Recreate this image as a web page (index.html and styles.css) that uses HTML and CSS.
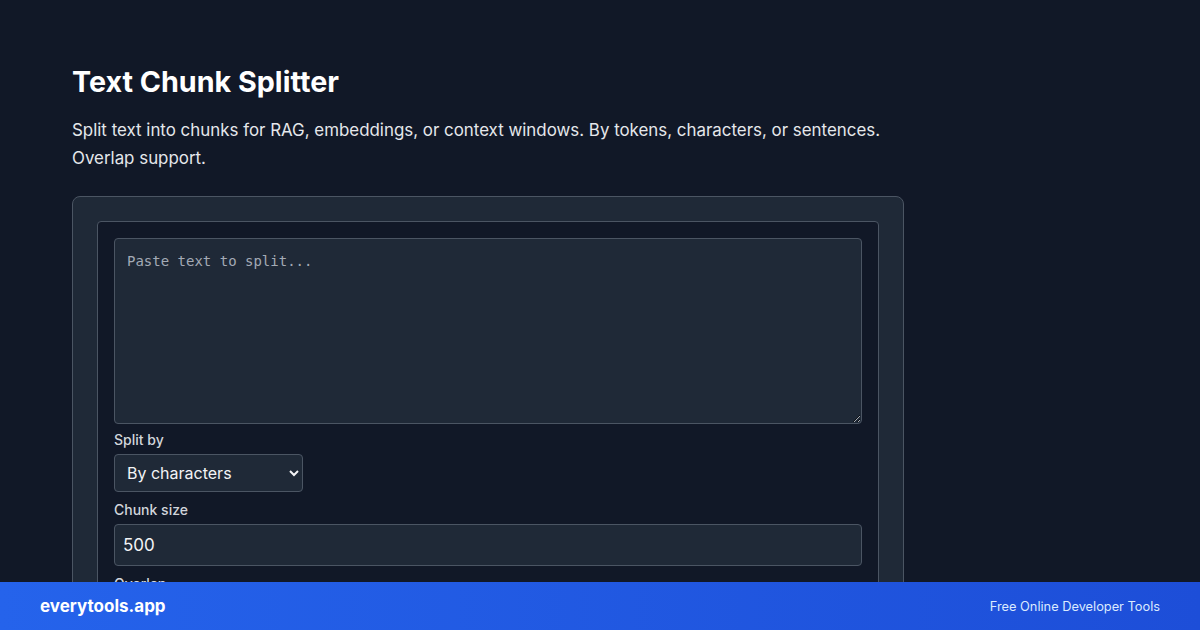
FILE: index.html
```html
<!DOCTYPE html>
<html lang="en">
<head>
<meta charset="utf-8">
<title>Text Chunk Splitter</title>
<link rel="stylesheet" href="styles.css">
</head>
<body>
<main class="page">
  <h1 class="title">Text Chunk Splitter</h1>
  <p class="desc">Split text into chunks for RAG, embeddings, or context windows. By tokens, characters, or sentences. Overlap support.</p>
  <section class="card">
    <div class="panel">
      <textarea class="text-in" placeholder="Paste text to split..."></textarea>
      <label class="lbl">Split by</label>
      <select class="sel">
        <option>By characters</option>
        <option>By tokens</option>
        <option>By sentences</option>
      </select>
      <label class="lbl">Chunk size</label>
      <input class="num" type="text" value="500">
      <label class="lbl">Overlap</label>
      <input class="num" type="text" value="50">
    </div>
  </section>
</main>
<footer class="footer">
  <span class="brand">everytools.app</span>
  <span class="tag">Free Online Developer Tools</span>
</footer>
</body>
</html>
```

FILE: styles.css
```css
* { box-sizing: border-box; }
html, body { margin: 0; padding: 0; }
body {
  background: #111827;
  color: #f3f4f6;
  font-family: Inter, "Noto Sans", sans-serif;
  overflow: hidden;
  height: 630px;
}
.page {
  padding: 64px 72px 0;
  width: 976px;
}
.title {
  margin: 0;
  font-size: 28.7px;
  line-height: 36px;
  font-weight: 700;
  color: #ffffff;
}
.desc {
  margin: 16px 0 0;
  font-size: 16.9px;
  line-height: 28px;
  color: #e5e7eb;
}
.card {
  margin-top: 24px;
  background: #1f2937;
  border: 1px solid #4b5563;
  border-radius: 8px;
  padding: 24px;
}
.panel {
  background: #111827;
  border: 1px solid #4b5563;
  border-radius: 4px;
  padding: 16px;
  display: flex;
  flex-direction: column;
  align-items: flex-start;
}
.text-in {
  width: 100%;
  height: 186px;
  background: #1f2937;
  border: 1px solid #4b5563;
  border-radius: 4px;
  padding: 14px 12px 12px;
  font-family: "DejaVu Sans Mono", monospace;
  font-size: 14px;
  color: #e5e7eb;
  resize: vertical;
  display: block;
  margin: 0 0 6px;
}
.text-in::placeholder { color: #a3aab5; }
.lbl {
  font-size: 14px;
  line-height: 20px;
  font-weight: 500;
  color: #d1d5db;
  margin-bottom: 4px;
}
.sel {
  width: 189px;
  height: 38px;
  background: #1f2937;
  border: 1px solid #4b5563;
  border-radius: 4px;
  color: #f3f4f6;
  font-family: Inter, sans-serif;
  font-size: 16px;
  padding: 0 8px;
  margin-bottom: 8px;
}
.num {
  width: 100%;
  height: 42px;
  background: #1f2937;
  border: 1px solid #4b5563;
  border-radius: 4px;
  color: #f3f4f6;
  font-family: Inter, sans-serif;
  font-size: 17px;
  padding: 0 8px;
  margin-bottom: 8px;
}
.footer {
  position: fixed;
  left: 0;
  right: 0;
  bottom: 0;
  height: 48px;
  background: linear-gradient(90deg, #2563eb, #1d4ed8);
  display: flex;
  align-items: center;
  justify-content: space-between;
  padding: 0 40px;
}
.brand {
  font-size: 17px;
  font-weight: 700;
  color: #ffffff;
}
.tag {
  font-size: 12.8px;
  color: #dbeafe;
}
```
